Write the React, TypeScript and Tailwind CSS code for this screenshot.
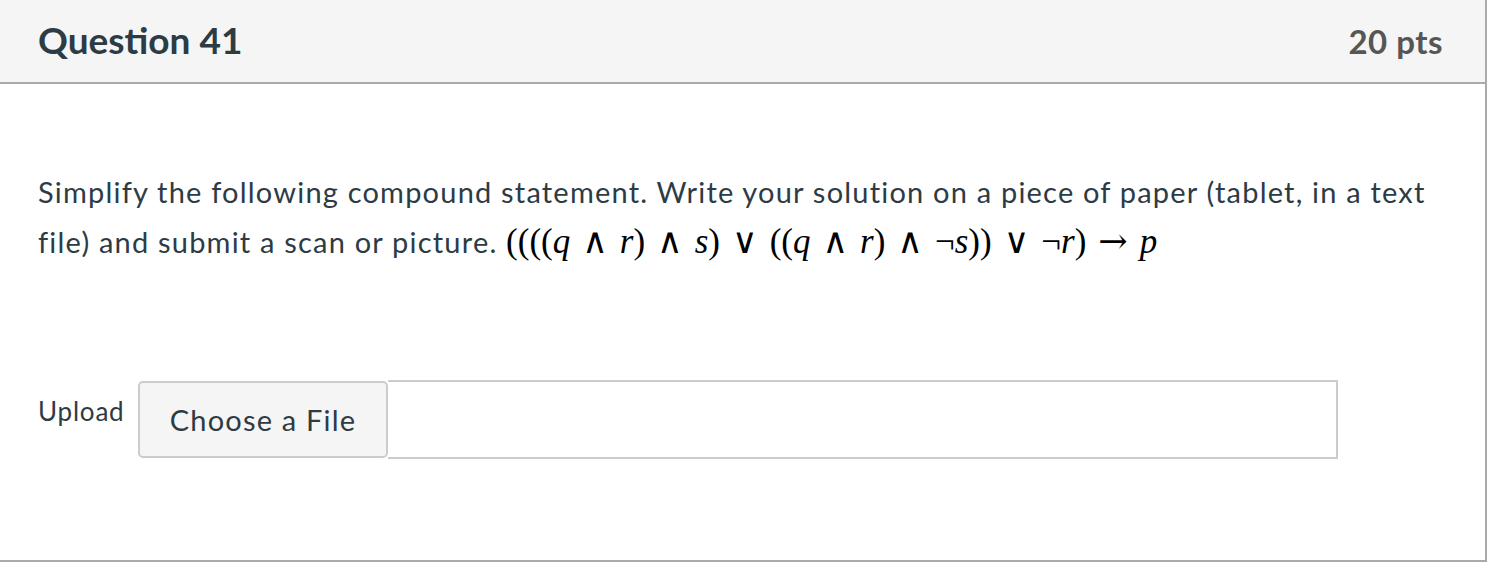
import React from 'react';

const lato = { fontFamily: 'Lato, "Noto Sans", sans-serif' };

function Op({ c }: { c: string }) {
  return (
    <span className="mx-[12px] not-italic" style={{ fontFamily: '"DejaVu Serif", serif' }}>
      {c}
    </span>
  );
}

function V({ c }: { c: string }) {
  return <span className="italic">{c}</span>;
}

function Formula() {
  return (
    <span
      className="text-[35px] leading-none text-black tracking-normal"
      style={{ fontFamily: '"Liberation Serif", "DejaVu Serif", serif' }}
    >
      ((((
      <V c="q" />
      <Op c="∧" />
      <V c="r" />)<Op c="∧" />
      <V c="s" />)<Op c="∨" />
      ((
      <V c="q" />
      <Op c="∧" />
      <V c="r" />)<Op c="∧" />
      <span className="not-italic">¬</span>
      <V c="s" />))<Op c="∨" />
      <span className="not-italic">¬</span>
      <V c="r" />)<Op c="→" />
      <V c="p" />
    </span>
  );
}

export default function App() {
  return (
    <div className="min-h-[569px] bg-white" style={lato}>
      <div className="w-[1487px] border-r-2 border-b-2 border-[#aaaaaa] text-[#2d3b45]">
        {/* Header */}
        <div className="h-[84px] bg-[#f5f5f5] border-b-2 border-[#aaaaaa] flex items-center justify-between pl-[38px] pr-[42px]">
          <h2 className="text-[37px] font-bold leading-none mt-[-4px]">Question 41</h2>
          <div className="text-[33px] font-bold tracking-[0.5px] text-[#565656] leading-none">20 pts</div>
        </div>

        {/* Body */}
        <div className="pl-[38px] pr-[30px] pt-[83px] h-[476px]">
          <p className="text-[29px] tracking-[1.2px] leading-[50px]">
            Simplify the following compound statement. Write your solution on a piece of paper (tablet, in a text
            file) and submit a scan or picture. <Formula />
          </p>

          <div className="flex items-start mt-[113px]">
            <div className="w-[100px] text-[26px] tracking-[0.8px] pt-[12px]">Upload</div>
            <button className="w-[250px] h-[77px] mt-[1px] bg-[#f5f5f5] border-2 border-[#c7cdd1] rounded-[5px] text-[29px] tracking-[1.2px] text-[#2d3b45] flex items-center justify-center">
              Choose a File
            </button>
            <div className="w-[950px] h-[79px] border-2 border-l-0 border-[#c7cdd1]" />
          </div>
        </div>
      </div>
    </div>
  );
}
